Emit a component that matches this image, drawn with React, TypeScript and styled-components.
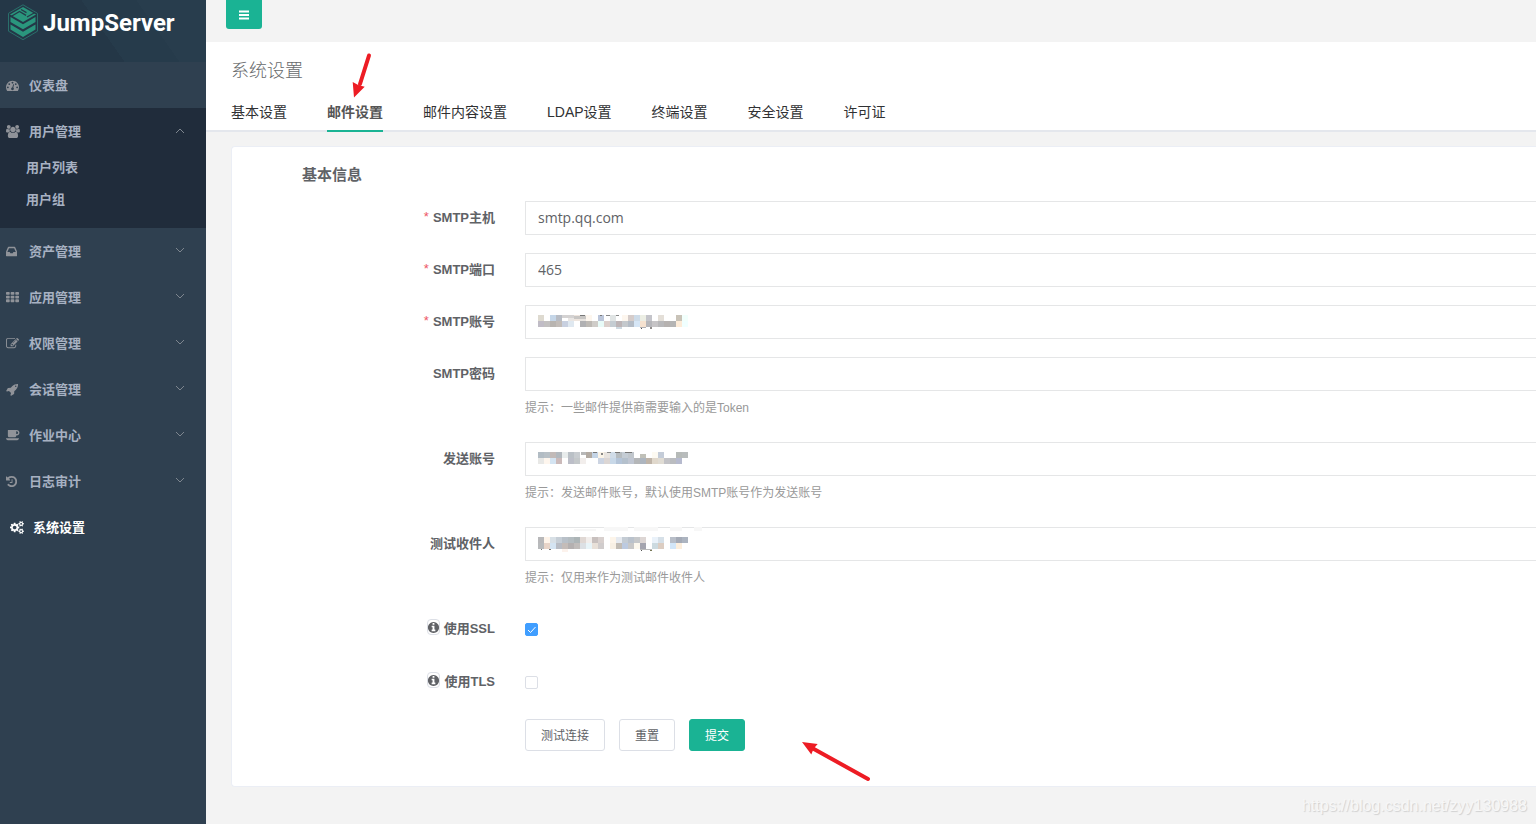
import React from 'react';
import styled, { createGlobalStyle, css } from 'styled-components';

const GlobalStyle = createGlobalStyle`
  *, *::before, *::after { box-sizing: border-box; }
  body {
    margin: 0;
    background: #f3f3f3;
    color: #606266;
    font-family: "Open Sans", "Noto Sans CJK SC", sans-serif;
    font-size: 13px;
  }
  ul { list-style: none; margin: 0; padding: 0; }
  button, input { font-family: inherit; }
`;

const sans = '"Liberation Sans", "Noto Sans CJK SC", sans-serif';

const Shell = styled.div`
  display: flex;
  min-height: 100vh;
  overflow: hidden;
  position: relative;
`;

/* ---------- Sidebar ---------- */

const Sidebar = styled.nav`
  flex: 0 0 206px;
  background: #2f4050;
`;

const Brand = styled.a`
  display: flex;
  align-items: flex-start;
  gap: 4px;
  height: 62px;
  padding: 4px 8px;
  background: linear-gradient(55deg, #243747 0 50%, #263b4b 50% 72%, #283d4d 72%);
  color: #fff;
  text-decoration: none;
`;

const BrandName = styled.span`
  font: 700 24px/38px Roboto, sans-serif;
`;

const Group = styled.li<{ $open?: boolean }>`
  background: ${(p) => (p.$open ? '#202c3b' : 'transparent')};
`;

const MenuLink = styled.a<{ $active?: boolean }>`
  display: flex;
  align-items: center;
  height: 46px;
  padding: 0 20px 0 ${(p) => (p.$active ? 10 : 6)}px;
  color: ${(p) => (p.$active ? '#fff' : '#a7b1c2')};
  font-weight: 600;
  line-height: 20px;
  text-decoration: none;
`;

const MenuText = styled.span`
  flex: 1;
  padding-bottom: 1px;
`;

const IconSlot = styled.span<{ $active?: boolean }>`
  display: flex;
  width: 23px;
  color: ${(p) => (p.$active ? '#fff' : '#909399')};
`;

const SubList = styled.ul`
  display: grid;
  gap: 6px;
  && { padding-bottom: 16px; }
`;

const SubLink = styled.a`
  display: block;
  padding-left: 26px;
  color: #a7b1c2;
  font-weight: 600;
  line-height: 26px;
  text-decoration: none;
`;

/* ---------- Main area ---------- */

const Main = styled.main`
  flex: 1;
  min-width: 0;
`;

const TopBar = styled.div`
  height: 42px;
  padding-left: 20px;
`;

const ToggleButton = styled.button`
  display: flex;
  align-items: center;
  justify-content: center;
  width: 36px;
  height: 29px;
  padding: 0;
  border: 0;
  border-radius: 0 0 3px 3px;
  background: #1ab394;
  color: #fff;
`;

const PageHead = styled.header`
  padding: 16px 0 0 25px;
  border-bottom: 2px solid #e4e7ed;
  background: #fff;
`;

const PageTitle = styled.h2`
  margin: 0;
  color: #676a6c;
  font-size: 18px;
  font-weight: 300;
  line-height: 24px;
`;

const Tabs = styled.div`
  display: flex;
  gap: 40px;
  margin: 12px 0 -2px;
`;

const Tab = styled.a<{ $active?: boolean }>`
  position: relative;
  height: 38px;
  border-bottom: 2px solid ${(p) => (p.$active ? '#1ab394' : 'transparent')};
  color: ${(p) => (p.$active ? '#555' : '#303133')};
  font-size: 14px;
  font-family: ${sans};
  font-weight: ${(p) => (p.$active ? 600 : 400)};
  line-height: 36px;
  text-decoration: none;
  white-space: nowrap;
`;

const Card = styled.form`
  margin: 14px 0 36px 25px;
  padding: 15px 0 35px;
  border: 1px solid #ebeef5;
  border-right: 0;
  border-radius: 4px 0 0 4px;
  background: #fff;
`;

const SectionTitle = styled.h3`
  margin: 0 0 15px 70px;
  font-size: 15px;
  font-weight: 600;
  line-height: 24px;
`;

const Row = styled.div<{ $tall?: boolean }>`
  display: grid;
  grid-template-columns: 263px minmax(0, 1fr);
  column-gap: 30px;
  margin-bottom: 18px;
  ${(p) => p.$tall && css`min-height: 35px;`}
`;

const Label = styled.label`
  display: flex;
  align-items: center;
  justify-content: flex-end;
  height: 30px;
  font-family: ${sans};
  font-weight: 700;
`;

const Star = styled.span`
  margin-right: 4px;
  color: #ed5565;
  font-weight: 400;
`;

const InfoBadge = styled.span`
  display: flex;
  align-items: center;
  justify-content: center;
  width: 13px;
  height: 16px;
  margin-right: 4px;
  border: 1px solid #dcdfe6;
  border-radius: 4px;
  svg { flex: none; }
`;

const Field = styled.div`
  position: relative;
`;

const TextInput = styled.input`
  display: block;
  width: 100%;
  height: 34px;
  padding: 0 12px 2px;
  border: 1px solid #e5e6e7;
  border-right: 0;
  border-radius: 1px 0 0 1px;
  outline: 0;
  background: #fff;
  color: #606266;
  font-size: 14px;
`;

const Hint = styled.p`
  margin: 2px 0 0;
  color: #999;
  font: 400 12px/31px ${sans};
`;

const Redaction = styled.svg`
  position: absolute;
  top: 8px;
  left: 13px;
  pointer-events: none;
`;

const Check = styled.input`
  appearance: none;
  display: block;
  width: 13px;
  height: 13px;
  margin: 11px 0 0;
  border: 1px solid #dcdfe6;
  border-radius: 2px;
  background: #fff;
  &:checked {
    border-color: #409eff;
    background: #409eff;
  }
  &:checked + svg { display: block; }
`;

const Tick = styled.svg`
  display: none;
  position: absolute;
  top: 11px;
  left: 0;
  pointer-events: none;
`;

const Actions = styled.div`
  position: relative;
  display: flex;
  gap: 14px;
  margin: 19px 0 0 293px;
`;

const Button = styled.button<{ $primary?: boolean }>`
  height: 32px;
  padding: 2px 15px 0;
  border: 1px solid ${(p) => (p.$primary ? '#1ab394' : '#dcdfe6')};
  border-radius: 3px;
  background: ${(p) => (p.$primary ? '#1ab394' : '#fff')};
  color: ${(p) => (p.$primary ? '#fff' : '#606266')};
  font-size: 12px;
  line-height: 18px;
`;

const TabArrow = styled.svg`
  position: absolute;
  top: -42px;
  left: 25px;
`;

const ActionArrow = styled.svg`
  position: absolute;
  top: 21px;
  left: 275px;
`;

const Watermark = styled.span`
  position: absolute;
  right: 9px;
  bottom: 8px;
  color: #f7f7f7;
  font: 16px/20px "Liberation Sans", sans-serif;
  text-shadow: 1px 1px 1px #d0d0d0;
`;

/* ---------- Icons ---------- */

const tile = (x: number, y: number) =>
  `M${x + 96} ${y}h320q96 0 96 96v192q0 96-96 96h-320q-96 0-96-96v-192q0-96 96-96z`;

const icons = {
  dashboard: {
    w: 1792,
    d: 'M384 1152q0-53-37.5-90.5t-90.5-37.5-90.5 37.5-37.5 90.5 37.5 90.5 90.5 37.5 90.5-37.5 37.5-90.5zm192-448q0-53-37.5-90.5t-90.5-37.5-90.5 37.5-37.5 90.5 37.5 90.5 90.5 37.5 90.5-37.5 37.5-90.5zm428 481l101-382q6-26-7.5-48.5t-38.5-29.5-48 6.5-30 39.5l-101 382q-60 5-107 43.5t-63 98.5q-20 77 20 146t117 89 146-20 89-117q16-60-6-117t-72-91zm660-33q0-53-37.5-90.5t-90.5-37.5-90.5 37.5-37.5 90.5 37.5 90.5 90.5 37.5 90.5-37.5 37.5-90.5zm-640-640q0-53-37.5-90.5t-90.5-37.5-90.5 37.5-37.5 90.5 37.5 90.5 90.5 37.5 90.5-37.5 37.5-90.5zm448 192q0-53-37.5-90.5t-90.5-37.5-90.5 37.5-37.5 90.5 37.5 90.5 90.5 37.5 90.5-37.5 37.5-90.5zm320 448q0 261-141 483-19 29-54 29h-1402q-35 0-54-29-141-221-141-483 0-182 71-348t191-286 286-191 348-71 348 71 286 191 191 286 71 348z',
  },
  users: {
    w: 1920,
    d: 'M593 896q-162 5-265 128h-134q-82 0-138-40.5t-56-118.5q0-353 124-353 6 0 43.5 21t97.5 42.5 119 21.5q67 0 133-23-5 37-5 66 0 139 81 256zm1071 637q0 120-73 189.5t-194 69.5h-874q-121 0-194-69.5t-73-189.5q0-53 3.5-103.5t14-109 26.5-108.5 43-97.5 62-81 85.5-53.5 111.5-20q10 0 43 21.5t73 48 107 48 135 21.5 135-21.5 107-48 73-48 43-21.5q61 0 111.5 20t85.5 53.5 62 81 43 97.5 26.5 108.5 14 109 3.5 103.5zm-1024-1277q0 106-75 181t-181 75-181-75-75-181 75-181 181-75 181 75 75 181zm704 384q0 159-112.5 271.5t-271.5 112.5-271.5-112.5-112.5-271.5 112.5-271.5 271.5-112.5 271.5 112.5 112.5 271.5zm576 225q0 78-56 118.5t-138 40.5h-134q-103-123-265-128 81-117 81-256 0-29-5-66 66 23 133 23 59 0 119-21.5t97.5-42.5 43.5-21q124 0 124 353zm-128-609q0 106-75 181t-181 75-181-75-75-181 75-181 181-75 181 75 75 181z',
  },
  inbox: {
    w: 1536,
    d: 'M1023 960h316q-1-3-2.5-8.5t-2.5-7.5l-212-496h-708l-212 496q-1 3-2.5 8.5t-2.5 7.5h316l95 192h320zm513 30v482q0 26-19 45t-45 19h-1408q-26 0-45-19t-19-45v-482q0-62 25-123l238-552q10-25 36.5-42t52.5-17h832q26 0 52.5 17t36.5 42l238 552q25 61 25 123z',
  },
  grid: {
    w: 1792,
    d: [128, 640, 1152].map((y) => [0, 640, 1280].map((x) => tile(x, y)).join('')).join(''),
  },
  edit: {
    w: 1792,
    d: 'M888 1184l116-116-152-152-116 116v56h96v96h56zm440-720q-16-16-33 1l-350 350q-17 17-1 33t33-1l350-350q17-17 1-33zm80 594v190q0 119-84.5 203.5t-203.5 84.5h-832q-119 0-203.5-84.5t-84.5-203.5v-832q0-119 84.5-203.5t203.5-84.5h832q63 0 117 25 15 7 18 23 3 17-9 29l-49 49q-14 14-32 8-23-6-45-6h-832q-66 0-113 47t-47 113v832q0 66 47 113t113 47h832q66 0 113-47t47-113v-126q0-13 9-22l64-64q15-15 35-7t20 29zm-96-738l288 288-672 672h-288v-288zm444 132l-92 92-288-288 92-92q28-28 68-28t68 28l152 152q28 28 28 68t-28 68z',
  },
  rocket: {
    w: 1664,
    d: 'M1440 448q0-40-28-68t-68-28-68 28-28 68 28 68 68 28 68-28 28-68zm224-288q0 249-75.5 430.5t-253.5 360.5q-81 80-195 176l-20 379q-2 16-16 26l-384 224q-7 4-16 4-12 0-23-9l-64-64q-13-14-8-32l85-276-281-281-276 85q-3 1-9 1-14 0-23-9l-64-64q-17-19-5-39l224-384q10-14 26-16l379-20q96-114 176-195 188-187 358-258t431-71q14 0 24 9.5t10 22.5z',
  },
  coffee: {
    w: 1920,
    d: 'M1664 512q0-80-56-136t-136-56h-64v384h64q80 0 136-56t56-136zm-1664 768h1792q0 106-75 181t-181 75h-1280q-106 0-181-75t-75-181zm1856-768q0 159-112.5 271.5t-271.5 112.5h-64v32q0 92-66 158t-158 66h-704q-92 0-158-66t-66-158v-736q0-26 19-45t45-19h1152q159 0 271.5 112.5t112.5 271.5z',
  },
  history: {
    w: 1536,
    d: 'M1536 896q0 156-61 298t-164 245-245 164-298 61q-172 0-327-72.5t-264-204.5q-7-10-6.5-22.5t8.5-20.5l137-138q10-9 25-9 16 2 23 12 73 95 179 147t225 52q104 0 198.5-40.5t163.5-109.5 109.5-163.5 40.5-198.5-40.5-198.5-109.5-163.5-163.5-109.5-198.5-40.5q-98 0-188 35.5t-160 101.5l137 138q31 30 14 69-17 40-59 40h-448q-26 0-45-19t-19-45v-448q0-42 40-59 39-17 69 14l130 129q107-101 244.5-156.5t284.5-55.5q156 0 298 61t245 164 164 245 61 298zm-640-288v448q0 14-9 23t-23 9h-320q-14 0-23-9t-9-23v-64q0-14 9-23t23-9h224v-352q0-14 9-23t23-9h64q14 0 23 9t9 23z',
  },
  cogs: {
    w: 1920,
    d: 'M896 896q0-106-75-181t-181-75-181 75-75 181 75 181 181 75 181-75 75-181zm768 512q0-52-38-90t-90-38-90 38-38 90q0 53 37.5 90.5t90.5 37.5 90.5-37.5 37.5-90.5zm0-1024q0-52-38-90t-90-38-90 38-38 90q0 53 37.5 90.5t90.5 37.5 90.5-37.5 37.5-90.5zm-384 421v185q0 10-7 19.5t-16 10.5l-155 24q-11 35-32 76 34 48 90 115 7 11 7 20 0 12-7 19-23 30-82.5 89.5t-78.5 59.5q-11 0-21-7l-115-90q-37 19-77 31-11 108-23 155-7 24-30 24h-186q-11 0-20-7.5t-10-17.5l-23-153q-34-10-75-31l-118 89q-7 7-20 7-11 0-21-8-144-133-144-160 0-9 7-19 10-14 41-53t47-61q-23-44-35-82l-152-24q-10-1-17-9.5t-7-19.5v-185q0-10 7-19.5t16-10.5l155-24q11-35 32-76-34-48-90-115-7-11-7-20 0-12 7-20 22-30 82-89t79-59q11 0 21 7l115 90q34-18 77-32 11-108 23-154 7-24 30-24h186q11 0 20 7.5t10 17.5l23 153q34 10 75 31l118-89q8-7 20-7 11 0 21 8 144 133 144 160 0 8-7 19-12 16-42 54t-45 60q23 48 34 82l152 23q10 2 17 10.5t7 19.5zm640 533v140q0 16-149 31-12 27-30 52 51 113 51 138 0 4-4 7-122 71-124 71-8 0-46-47t-52-68q-20 2-30 2t-30-2q-14 21-52 68t-46 47q-2 0-124-71-4-3-4-7 0-25 51-138-18-25-30-52-149-15-149-31v-140q0-16 149-31 13-29 30-52-51-113-51-138 0-4 4-7 4-2 35-20t59-34 30-16q8 0 46 46.5t52 67.5q20-2 30-2t30 2q51-71 92-112l6-2q4 0 124 70 4 3 4 7 0 25-51 138 17 23 30 52 149 15 149 31zm0-1024v140q0 16-149 31-12 27-30 52 51 113 51 138 0 4-4 7-122 71-124 71-8 0-46-47t-52-68q-20 2-30 2t-30-2q-14 21-52 68t-46 47q-2 0-124-71-4-3-4-7 0-25 51-138-18-25-30-52-149-15-149-31v-140q0-16 149-31 13-29 30-52-51-113-51-138 0-4 4-7 4-2 35-20t59-34 30-16q8 0 46 46.5t52 67.5q20-2 30-2t30 2q51-71 92-112l6-2q4 0 124 70 4 3 4 7 0 25-51 138 17 23 30 52 149 15 149 31z',
  },
  info: {
    w: 1792,
    d: 'M1152 1376v-160q0-14-9-23t-23-9h-96v-512q0-14-9-23t-23-9h-320q-14 0-23 9t-9 23v160q0 14 9 23t23 9h96v320h-96q-14 0-23 9t-9 23v160q0 14 9 23t23 9h448q14 0 23-9t9-23zm-128-896v-160q0-14-9-23t-23-9h-192q-14 0-23 9t-9 23v160q0 14 9 23t23 9h192q14 0 23-9t9-23zm640 416q0 209-103 385.5t-279.5 279.5-385.5 103-385.5-103-279.5-279.5-103-385.5 103-385.5 279.5-279.5 385.5-103 385.5 103 279.5 279.5 103 385.5z',
  },
};

type IconName = keyof typeof icons;

const Icon = ({ name, size = 13 }: { name: IconName; size?: number }) => {
  const { w, d } = icons[name];
  return (
    <svg width={(size * w) / 1792} height={size} viewBox={`0 0 ${w} 1792`} fill="currentColor" aria-hidden="true">
      <path d={d} />
    </svg>
  );
};

const BarsIcon = () => (
  <svg width="12" height="10" viewBox="0 0 12 10" fill="currentColor" aria-hidden="true">
    <path d="M1 .5h10v2H1zM1 4h10v2H1zM1 7.500h10v2H1z" />
  </svg>
);

const Chevron = ({ up }: { up?: boolean }) => (
  <svg width="12" height="8" viewBox="0 0 12 8" fill="none" stroke="#7e868f" aria-hidden="true">
    <path d={up ? 'M2 6l4-4 4 4' : 'M2 1l4 4 4-4'} />
  </svg>
);

const LogoMark = () => (
  <svg width="31" height="37" viewBox="0 0 31 37" fill="none" aria-hidden="true">
    <path d="M15 .8L29.500 9.300v17.900L15 35.700.5 27.200V9.300z" stroke="#2a6f6b" strokeWidth="1" />
    <path d="M2 10.500L15 3 28 10.500 15 18z" fill="#2a967d" />
    <path d="M3 12.500L11.500 7.500 18 11.300M27 8.500L19 13M13 5.500l5.500 3.200" stroke="#253a49" strokeWidth="1.400" />
    <path d="M2.500 13L15 20.300 27.500 13v5L15 25.300 2.500 18z" fill="#2a967d" />
    <path d="M2.500 20.500L15 27.800l12.500-7.300v5.100L15 33 2.500 25.600z" fill="#2a967d" />
  </svg>
);

/* ---------- Redacted values ---------- */

type Mosaic = { rows: string[]; extra: [number, number, number, number, string][] };

const mosaics: Record<string, Mosaic> = {
  account: {
    rows: [
      'dedad0 ffffff c5d6e8 b8bcc4 ffffff e9e6e4 eee5de e8e4e0 fdf6ee ffffff bcc6da ffffff e0e4e4 ffffff fdf6ee d5ccca cddbe8 eceee4 c4c4ca ffffff e4dfd8 ffffff ffffff c9c3b8 f2fffc',
      'c0bcc6 c2c0c0 b8b4b0 c2bcb8 c8d0e0 dfe8f0 ffffff b0b0b2 bdb9b4 cfccc8 e8fbf8 dcd0cc c4ccd2 bcb4b6 c4c8cc b4bcc6 d6e6f6 f6e2d0 b6b6ba c6c4c6 b8b8ba b6b2b0 b4b4b4 fcebd8 f0ffff',
    ],
    extra: [
      [24, 2, 12, 3, '#d4d2d2'],
      [36, 3, 12, 3, '#c8c6c4'],
      [42, 2, 5, 1, '#777'],
      [62, 2, 2, 1, '#777'],
      [68, 2, 4, 1, '#888'],
      [78, 2, 3, 1, '#888'],
      [78, 14, 6, 2, '#cdd8e0'],
      [102, 14, 6, 1, '#b0b0b4'],
      [103, 15, 1, 1, '#555'],
      [112, 14, 2, 2, '#8f8c8a'],
    ],
  },
  sender: {
    rows: [
      'b2bcc4 b8c0c6 c2bab8 b2b8be e8ecec bac0c6 c8ccd0 ffffff b2aaa2 c4d4e6 fbf4e8 e8e4e0 d0dce8 b6bcc0 c4ccd4 c0c6cc ffffff ffffff ffffff fdfaf2 c4ccd8 ffffff ffffff b6bab8 b8bcbc',
      'e8e8e6 fef6ee d4e4f2 cbbaba ffffff bcbec8 c4c8ca f2eeec ffffff ffffff ccd4e2 dcd6d4 c8d8e8 b4c4d8 b4c0cc c0c6d2 b4b6b8 adb5bf bfb4a8 e0d8cc e0dcd4 c2c2c6 babcc0 b6bace ffffff',
    ],
    extra: [
      [43, 2, 5, 3, '#b8b8b8'],
      [55, 2, 4, 1, '#777'],
      [63, 3, 2, 2, '#888'],
      [69, 2, 4, 1, '#888'],
      [77, 2, 5, 1, '#777'],
      [87, 2, 7, 1, '#777'],
      [102, 4, 6, 4, '#c0c0b8'],
    ],
  },
  receiver: {
    rows: [
      'b8b8ba fef4ea d8e0e6 c6ced6 b8c0c8 b4bcc0 acb4b6 e0d8d4 f2eeec c8c0be d8d0ce ffffff fdf5ea e6eaf0 c4ccd4 bac2cc c6c8ca ddd6d4 ffffff eaf2fa d6e0e8 ffffff b8bec8 a4aab6 acb4c0',
      'b8babc e8d4c8 d4e4f2 b8bcc4 c4bcb8 b4b0b0 c0bcba dce0e4 e8f4f8 e8e0d8 d0cccc ffffff f8f0e4 c2bcb4 bccae0 c8c8c8 fcf8ee a4a4ae ffffff ccdae0 dccdc2 ffffff d2e6f8 fceedc ffffff',
    ],
    extra: [
      [3, 14, 1, 1, '#777'],
      [11, 14, 2, 1, '#777'],
      [24, 14, 6, 3, '#fcf2ec'],
      [102, 14, 12, 1, '#bbb'],
      [103, 15, 1, 1, '#555'],
      [112, 15, 2, 1, '#775'],
      [36, -6, 22, 2, '#f7f7f7'],
      [66, -8, 24, 4, '#f7f7f7'],
      [96, -8, 24, 4, '#f7f7f7'],
      [132, -8, 12, 4, '#f7f7f7'],
      [156, -8, 8, 4, '#f7f7f7'],
    ],
  },
};

const Redacted = ({ kind }: { kind: string }) => {
  const { rows, extra } = mosaics[kind];
  return (
    <Redaction width="170" height="20" overflow="visible" shapeRendering="crispEdges" aria-hidden="true">
      {rows.map((row, y) =>
        row.split(' ').map((fill, x) => (
          <rect key={`${x}-${y}`} x={x * 6} y={2 + y * 6} width="6" height="6" fill={`#${fill}`} />
        )),
      )}
      {extra.map(([x, y, w, h, fill], i) => (
        <rect key={i} x={x} y={y} width={w} height={h} fill={fill} />
      ))}
    </Redaction>
  );
};

/* ---------- Page data ---------- */

const menu: { icon: IconName; text: string; children?: string[]; leaf?: boolean; active?: boolean }[] = [
  { icon: 'dashboard', text: '仪表盘', leaf: true },
  { icon: 'users', text: '用户管理', children: ['用户列表', '用户组'] },
  { icon: 'inbox', text: '资产管理' },
  { icon: 'grid', text: '应用管理' },
  { icon: 'edit', text: '权限管理' },
  { icon: 'rocket', text: '会话管理' },
  { icon: 'coffee', text: '作业中心' },
  { icon: 'history', text: '日志审计' },
  { icon: 'cogs', text: '系统设置', leaf: true, active: true },
];

const tabs = ['基本设置', '邮件设置', '邮件内容设置', 'LDAP设置', '终端设置', '安全设置', '许可证'];

const fields: {
  id: string;
  label: string;
  required?: boolean;
  value?: string;
  type?: string;
  mosaic?: string;
  hint?: string;
}[] = [
  { id: 'host', label: 'SMTP主机', required: true, value: 'smtp.qq.com' },
  { id: 'port', label: 'SMTP端口', required: true, value: '465' },
  { id: 'account', label: 'SMTP账号', required: true, mosaic: 'account' },
  { id: 'password', label: 'SMTP密码', type: 'password', hint: '提示：一些邮件提供商需要输入的是Token' },
  { id: 'sender', label: '发送账号', mosaic: 'sender', hint: '提示：发送邮件账号，默认使用SMTP账号作为发送账号' },
  { id: 'receiver', label: '测试收件人', mosaic: 'receiver', hint: '提示：仅用来作为测试邮件收件人' },
];

const switches = [
  { id: 'ssl', label: '使用SSL', on: true },
  { id: 'tls', label: '使用TLS', on: false },
];

export default function App() {
  return (
    <>
      <GlobalStyle />
      <Shell>
        <Sidebar>
          <Brand href="#">
            <LogoMark />
            <BrandName>JumpServer</BrandName>
          </Brand>
          <ul>
            {menu.map((item) => (
              <Group key={item.text} $open={!!item.children}>
                <MenuLink href="#" $active={item.active}>
                  <IconSlot $active={item.active}>
                    <Icon name={item.icon} />
                  </IconSlot>
                  <MenuText>{item.text}</MenuText>
                  {!item.leaf && <Chevron up={!!item.children} />}
                </MenuLink>
                {item.children && (
                  <SubList>
                    {item.children.map((child) => (
                      <li key={child}>
                        <SubLink href="#">{child}</SubLink>
                      </li>
                    ))}
                  </SubList>
                )}
              </Group>
            ))}
          </ul>
        </Sidebar>
        <Main>
          <TopBar>
            <ToggleButton type="button" aria-label="Toggle menu">
              <BarsIcon />
            </ToggleButton>
          </TopBar>
          <PageHead>
            <PageTitle>系统设置</PageTitle>
            <Tabs>
              {tabs.map((tab, i) => (
                <Tab key={tab} href="#" $active={i === 1}>
                  {tab}
                  {i === 1 && (
                    <TabArrow width="24" height="46" viewBox="0 0 24 46" aria-hidden="true">
                      <path d="M17 3.500L8 32" stroke="#ed1c24" strokeWidth="4" strokeLinecap="round" />
                      <path d="M2 45.500L.7 30l5.500 3 6.500 1.700z" fill="#ed1c24" />
                    </TabArrow>
                  )}
                </Tab>
              ))}
            </Tabs>
          </PageHead>
          <Card onSubmit={(e) => e.preventDefault()}>
            <SectionTitle>基本信息</SectionTitle>
            {fields.map((f) => (
              <Row key={f.id}>
                <Label htmlFor={f.id}>
                  {f.required && <Star>*</Star>}
                  {f.label}
                </Label>
                <Field>
                  <TextInput id={f.id} type={f.type ?? 'text'} defaultValue={f.value} />
                  {f.mosaic && <Redacted kind={f.mosaic} />}
                  {f.hint && <Hint>{f.hint}</Hint>}
                </Field>
              </Row>
            ))}
            {switches.map((s) => (
              <Row key={s.id} $tall>
                <Label htmlFor={s.id}>
                  <InfoBadge>
                    <Icon name="info" />
                  </InfoBadge>
                  {s.label}
                </Label>
                <Field>
                  <Check id={s.id} type="checkbox" defaultChecked={s.on} />
                  <Tick width="13" height="13" viewBox="0 0 13 13" fill="none" stroke="#fff" aria-hidden="true">
                    <path d="M3 7l2.500 2.500L10.500 4" />
                  </Tick>
                </Field>
              </Row>
            ))}
            <Actions>
              <Button type="button">测试连接</Button>
              <Button type="reset">重置</Button>
              <Button type="submit" $primary>
                提交
              </Button>
              <ActionArrow width="72" height="42" viewBox="0 0 72 42" aria-hidden="true">
                <path d="M13 8.500L68 39" stroke="#ed1c24" strokeWidth="4" strokeLinecap="round" />
                <path d="M2 2l15.700 2-4 4.500-2.400 6z" fill="#ed1c24" />
              </ActionArrow>
            </Actions>
          </Card>
        </Main>
        <Watermark>https://blog.csdn.net/zyy130988</Watermark>
      </Shell>
    </>
  );
}
